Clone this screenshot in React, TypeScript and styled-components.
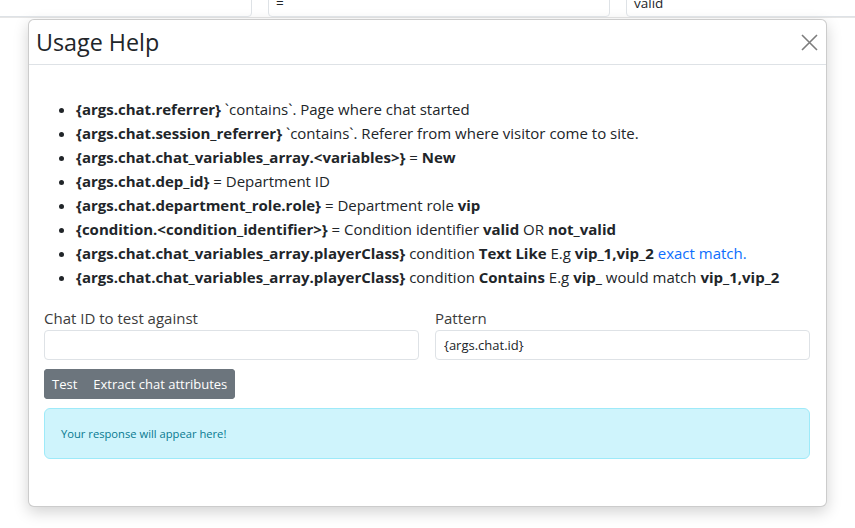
import styled, { createGlobalStyle } from 'styled-components'

const GlobalStyle = createGlobalStyle`
	html, body {
		margin: 0;
		padding: 0;
		background: #fff;
	}
	body {
		font-family: 'Open Sans', 'Noto Sans', sans-serif;
		color: #212529;
		overflow: hidden;
	}
`

const HelpItems = () => (
	<HelpList>
		<li>
			<b>{'{args.chat.referrer}'}</b> `contains`. Page where chat started
		</li>
		<li>
			<b>{'{args.chat.session_referrer}'}</b> `contains`. Referer from where visitor come to site.
		</li>
		<li>
			<b>{'{args.chat.chat_variables_array.<variables>}'}</b> = <b>New</b>
		</li>
		<li>
			<b>{'{args.chat.dep_id}'}</b> = Department ID
		</li>
		<li>
			<b>{'{args.chat.department_role.role}'}</b> = Department role <b>vip</b>
		</li>
		<li>
			<b>{'{condition.<condition_identifier>}'}</b> = Condition identifier <b>valid</b> OR <b>not_valid</b>
		</li>
		<li>
			<b>{'{args.chat.chat_variables_array.playerClass}'}</b> condition <b>Text Like</b> E.g <b>vip_1,vip_2</b>{' '}
			<Link href="#">exact match.</Link>
		</li>
		<li>
			<b>{'{args.chat.chat_variables_array.playerClass}'}</b> condition <b>Contains</b> E.g <b>vip_</b> would match{' '}
			<b>vip_1,vip_2</b>
		</li>
	</HelpList>
)

const App = () => {
	return (
		<Page>
			<GlobalStyle />
			<TopStrip>
				<StripBox $w={272}></StripBox>
				<StripBox $w={342}>=</StripBox>
				<StripBox $w={300}>valid</StripBox>
			</TopStrip>
			<Modal>
				<Header>
					<Title>Usage Help</Title>
					<Close aria-label="Close">
						<svg width="17" height="17" viewBox="0 0 17 17">
							<path d="M1 1 L16 16 M16 1 L1 16" stroke="#7d7d7d" strokeWidth="1.6" fill="none" />
						</svg>
					</Close>
				</Header>
				<Body>
					<HelpItems />
					<FormRow>
						<Field>
							<Label>Chat ID to test against</Label>
							<Input type="text" />
						</Field>
						<Field>
							<Label>Pattern</Label>
							<Input type="text" defaultValue="{args.chat.id}" />
						</Field>
					</FormRow>
					<BtnGroup>
						<Btn>Test</Btn>
						<Btn>Extract chat attributes</Btn>
					</BtnGroup>
					<Alert>Your response will appear here!</Alert>
				</Body>
			</Modal>
		</Page>
	)
}

const Page = styled.div`
	width: 855px;
	height: 528px;
	position: relative;
	overflow: hidden;
`

const TopStrip = styled.div`
	display: flex;
	gap: 16px;
	margin-left: -20px;
	height: 18px;
	overflow: hidden;
	border-bottom: 1px solid #e6e6e6;
	box-sizing: border-box;
`

const StripBox = styled.div<{ $w: number }>`
	flex: 0 0 ${(p) => p.$w}px;
	height: 30px;
	margin-top: -13px;
	box-sizing: border-box;
	border: 1px solid #dee2e6;
	border-radius: 4px;
	padding: 0 7px;
	font-size: 13.5px;
	line-height: 30px;
	color: #212529;
`

const Modal = styled.div`
	margin: 1px 28px 0 28px;
	width: 799px;
	height: 488px;
	box-sizing: border-box;
	background: #fff;
	border: 1px solid rgba(0, 0, 0, 0.2);
	border-radius: 6px;
	box-shadow: 0 5px 15px rgba(0, 0, 0, 0.18);
	display: flex;
	flex-direction: column;
`

const Header = styled.div`
	display: flex;
	align-items: center;
	justify-content: space-between;
	height: 45px;
	box-sizing: border-box;
	padding: 0 7px 0 7px;
	border-bottom: 1px solid #dee2e6;
`

const Title = styled.h4`
	margin: 0;
	font-size: 23.3px;
	font-weight: 400;
	color: #212529;
`

const Close = styled.button`
	border: 0;
	background: transparent;
	padding: 0;
	width: 20px;
	height: 20px;
	display: flex;
	align-items: center;
	justify-content: center;
	cursor: pointer;
`

const Body = styled.div`
	padding: 32px 16px 16px 15px;
`

const HelpList = styled.ul`
	margin: 0 0 17px 0;
	padding-left: 32px;
	font-size: 15px;
	line-height: 24px;

	b {
		font-weight: 700;
	}
`

const Link = styled.a`
	color: #0d6efd;
	text-decoration: none;
`

const FormRow = styled.div`
	display: grid;
	grid-template-columns: 1fr 1fr;
	gap: 16px;
`

const Field = styled.div`
	display: flex;
	flex-direction: column;
`

const Label = styled.label`
	font-size: 15px;
	line-height: 24px;
	color: #3c3c3c;
`

const Input = styled.input`
	height: 30px;
	box-sizing: border-box;
	border: 1px solid #dee2e6;
	border-radius: 4px;
	padding: 0 8px;
	font-family: inherit;
	font-size: 13px;
	color: #212529;
	outline: none;
`

const BtnGroup = styled.div`
	display: inline-flex;
	margin-top: 9px;
	background: #6c757d;
	border-radius: 4px;
	overflow: hidden;
`

const Btn = styled.button`
	border: 0;
	background: #6c757d;
	color: #fff;
	font-family: inherit;
	font-size: 13px;
	height: 30px;
	padding: 0 8px;
	cursor: pointer;
`

const Alert = styled.div`
	margin-top: 9px;
	height: 51px;
	box-sizing: border-box;
	background: #cff4fc;
	border: 1px solid #9eeaf9;
	border-radius: 6px;
	padding: 0 16px;
	display: flex;
	align-items: center;
	font-size: 11.2px;
	color: #087990;
`

export default App
